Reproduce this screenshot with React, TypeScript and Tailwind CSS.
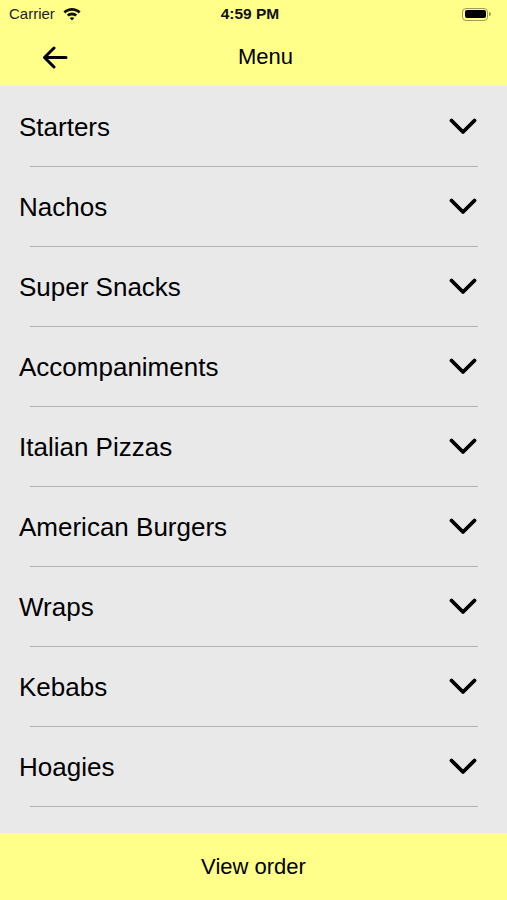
import React from 'react';

const CATEGORIES = [
  'Starters',
  'Nachos',
  'Super Snacks',
  'Accompaniments',
  'Italian Pizzas',
  'American Burgers',
  'Wraps',
  'Kebabs',
  'Hoagies',
];

const Wifi = () => (
  <svg width="18" height="13" viewBox="0 0 18 13" fill="#111">
    <path d="M9 0C5.7 0 2.7 1.3.4 3.4l1.9 2C4.1 3.7 6.4 2.8 9 2.8s4.9.9 6.7 2.6l1.9-2C15.3 1.3 12.3 0 9 0z" />
    <path d="M9 4.6c-2 0-3.8.8-5.2 2l1.9 2C6.6 7.8 7.7 7.4 9 7.4s2.4.4 3.3 1.2l1.9-2c-1.4-1.2-3.2-2-5.2-2z" />
    <path d="M9 9.2c-.9 0-1.7.3-2.3.9L9 12.6l2.3-2.5c-.6-.6-1.4-.9-2.3-.9z" />
  </svg>
);

const Battery = () => (
  <div className="flex items-center">
    <div className="w-[26px] h-[13px] rounded-[4px] border border-[#9c9c5a] p-[1.5px]">
      <div className="w-full h-full rounded-[2px] bg-black" />
    </div>
    <div className="w-[2px] h-[4px] rounded-r-sm bg-[#9c9c5a] ml-[1px]" />
  </div>
);

const Chevron = () => (
  <svg width="28" height="17" viewBox="0 0 28 17" fill="none">
    <path d="M2.5 2.5L14 14L25.5 2.5" stroke="#000" strokeWidth="3.8" strokeLinecap="round" strokeLinejoin="round" />
  </svg>
);

const BackArrow = () => (
  <svg width="26" height="23" viewBox="0 0 26 23" fill="none">
    <path d="M24 11.5H3M12 2L2.5 11.5L12 21" stroke="#000" strokeWidth="3" strokeLinecap="round" strokeLinejoin="round" />
  </svg>
);

export default function App() {
  return (
    <div className="w-[507px] h-[900px] flex flex-col bg-[#e9e9e9] font-['Liberation_Sans',Arial,sans-serif] text-black">
      <div className="bg-[#ffff8a] h-[86px] flex flex-col">
        <div className="h-[28px] flex items-center px-[9px] text-[15px]">
          <div className="flex-1 flex items-center gap-[8px]">
            <span className="text-[#222]">Carrier</span>
            <Wifi />
          </div>
          <span className="font-bold text-[15.5px] text-[#111]">4:59 PM</span>
          <div className="flex-1 flex justify-end pr-[7px]">
            <Battery />
          </div>
        </div>
        <div className="flex-1 flex items-center">
          <div className="pl-[42px] flex items-center">
            <BackArrow />
          </div>
          <div className="flex-1 text-center text-[22px] pb-[2px]">Menu</div>
          <div className="w-[44px]" />
        </div>
      </div>

      <div className="flex-1 flex flex-col pt-[1px]">
        {CATEGORIES.map((c) => (
          <div key={c} className="h-[80px] flex flex-col">
            <div className="flex-1 flex items-center justify-between pl-[19px] pr-[30px]">
              <span className="text-[26px] leading-none">{c}</span>
              <Chevron />
            </div>
            <div className="h-px bg-[#b2b2b2] ml-[30px] mr-[29px]" />
          </div>
        ))}
      </div>

      <div className="h-[67px] bg-[#ffff8a] flex items-center justify-center text-[22px]">
        View order
      </div>
    </div>
  );
}
